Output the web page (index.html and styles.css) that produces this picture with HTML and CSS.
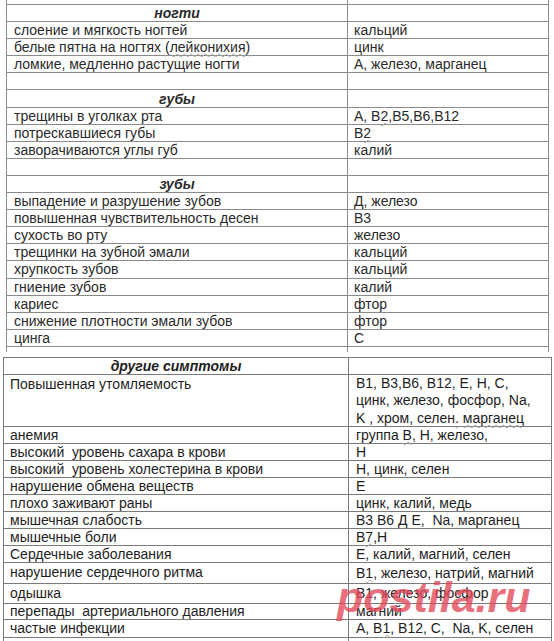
FILE: index.html
```html
<!DOCTYPE html>
<html lang="ru">
<head>
<meta charset="utf-8">
<title>Симптомы и нехватка витаминов</title>
<link rel="stylesheet" href="styles.css">
</head>
<body>
<div class="page">
  <div class="tbl tbl-top">
    <div class="row cut-top"><div class="c1"></div><div class="c2"></div></div>
    <div class="row"><div class="c1 head">ногти</div><div class="c2"></div></div>
    <div class="row"><div class="c1">слоение и мягкость ногтей</div><div class="c2">кальций</div></div>
    <div class="row"><div class="c1"><span>белые пятна на ногтях <span class="sq">(лейконихия)</span></span></div><div class="c2">цинк</div></div>
    <div class="row"><div class="c1">ломкие, медленно растущие ногти</div><div class="c2">А, железо, марганец</div></div>
    <div class="row"><div class="c1"></div><div class="c2"></div></div>
    <div class="row"><div class="c1 head">губы</div><div class="c2"></div></div>
    <div class="row"><div class="c1">трещины в уголках рта</div><div class="c2"><span>А, В<span class="sq">2</span>,В5,В6,В12</span></div></div>
    <div class="row"><div class="c1">потрескавшиеся губы</div><div class="c2"><span>В<span class="sq">2</span></span></div></div>
    <div class="row"><div class="c1">заворачиваются углы губ</div><div class="c2">калий</div></div>
    <div class="row"><div class="c1"></div><div class="c2"></div></div>
    <div class="row"><div class="c1 head">зубы</div><div class="c2"></div></div>
    <div class="row"><div class="c1">выпадение и разрушение зубов</div><div class="c2">Д, железо</div></div>
    <div class="row"><div class="c1">повышенная чувствительность десен</div><div class="c2">В3</div></div>
    <div class="row"><div class="c1">сухость во рту</div><div class="c2">железо</div></div>
    <div class="row"><div class="c1">трещинки на зубной эмали</div><div class="c2">кальций</div></div>
    <div class="row"><div class="c1">хрупкость зубов</div><div class="c2">кальций</div></div>
    <div class="row"><div class="c1">гниение зубов</div><div class="c2">калий</div></div>
    <div class="row"><div class="c1">кариес</div><div class="c2">фтор</div></div>
    <div class="row"><div class="c1">снижение плотности эмали зубов</div><div class="c2">фтор</div></div>
    <div class="row"><div class="c1">цинга</div><div class="c2">С</div></div>
    <div class="row cut-bottom"><div class="c1"></div><div class="c2"></div></div>
  </div>

  <div class="tbl tbl-bottom">
    <div class="row r17"><div class="c1 head">другие симптомы</div><div class="c2"></div></div>
    <div class="row r52"><div class="c1 top">Повышенная утомляемость</div><div class="c2 multi">В1, В3,В6, В12, Е, Н, С,<br>цинк, железо, фосфор, Na,<br>K , хром, селен<span class="sq">.</span> <span class="sq">марганец</span></div></div>
    <div class="row r17"><div class="c1">анемия</div><div class="c2"><span>группа <span class="sq">В</span>, Н, железо,</span></div></div>
    <div class="row r17"><div class="c1">высокий&nbsp; уровень сахара в крови</div><div class="c2">Н</div></div>
    <div class="row r17"><div class="c1">высокий&nbsp; уровень холестерина в крови</div><div class="c2">Н, цинк, селен</div></div>
    <div class="row r17"><div class="c1">нарушение обмена веществ</div><div class="c2">Е</div></div>
    <div class="row r17"><div class="c1">плохо заживают раны</div><div class="c2">цинк, калий, медь</div></div>
    <div class="row r17"><div class="c1">мышечная слабость</div><div class="c2"><span>В3 В6 <span class="sq">Д</span> Е,&nbsp; Na, марганец</span></div></div>
    <div class="row r17"><div class="c1">мышечные боли</div><div class="c2"><span>В<span class="sq">7</span>,Н</span></div></div>
    <div class="row r17"><div class="c1">Сердечные заболевания</div><div class="c2">Е, калий, магний, селен</div></div>
    <div class="row r21"><div class="c1 up">нарушение сердечного ритма</div><div class="c2"><span>В<span class="sq">1</span>, железо, натрий, магний</span></div></div>
    <div class="row r20"><div class="c1 up">одышка</div><div class="c2">В1, железо, фосфор</div></div>
    <div class="row r16"><div class="c1">перепады&nbsp; артериального давления</div><div class="c2">магний</div></div>
    <div class="row r18"><div class="c1">частые инфекции</div><div class="c2"><span>А, В<span class="sq">1</span>, В12, С,&nbsp; Na, K, селен</span></div></div>
    <div class="row r4"><div class="c1"></div><div class="c2"></div></div>
  </div>

  <div class="watermark">postila.ru</div>
</div>
</body>
</html>
```

FILE: styles.css
```css
html, body {
  margin: 0;
  padding: 0;
  background: #ffffff;
}

.page {
  position: relative;
  width: 554px;
  height: 641px;
  overflow: hidden;
  font-family: "Liberation Sans", Arial, sans-serif;
  font-size: 14px;
  color: #1e1e1e;
}

.tbl {
  box-sizing: border-box;
  border-left: 1px solid #8a8a8a;
  border-right: 1px solid #8a8a8a;
}

.tbl-top {
  margin-left: 6px;
  width: 543px;
  color: #2a2a2a;
}

.tbl-bottom {
  margin-left: 3px;
  margin-top: 5px;
  width: 549px;
  border-top: 1px solid #7a7a7a;
  border-left-color: #7a7a7a;
  border-right-color: #7a7a7a;
}

.row {
  box-sizing: border-box;
  display: flex;
  height: 17.1px;
  border-bottom: 1px solid #8a8a8a;
}

.tbl-bottom .row {
  border-bottom-color: #7a7a7a;
}

.c1, .c2 {
  box-sizing: border-box;
  display: flex;
  align-items: center;
  white-space: nowrap;
  line-height: 16px;
}

.tbl-top .c1 {
  width: 341px;
  border-right: 1px solid #8a8a8a;
  padding-left: 7px;
}

.tbl-top .c2 {
  flex: 1;
  padding-left: 6px;
}

.tbl-bottom .c1 {
  width: 345px;
  border-right: 1px solid #7a7a7a;
  padding-left: 6px;
}

.tbl-bottom .c2 {
  flex: 1;
  padding-left: 7px;
}

.head {
  justify-content: center;
  font-style: italic;
  font-weight: bold;
  padding-left: 0 !important;
}

.cut-top {
  height: 5px;
}

.cut-bottom {
  height: 5px;
  border-bottom: none;
}

.tbl-bottom .r17 { height: 17px; }
.tbl-bottom .r52 { height: 52px; }
.tbl-bottom .r21 { height: 21px; }
.tbl-bottom .r20 { height: 20px; }
.tbl-bottom .r18 { height: 18px; }
.tbl-bottom .r16 { height: 16px; }
.tbl-bottom .r4 { height: 4px; border-bottom: none; }

.top {
  align-items: flex-start;
  padding-top: 1px;
}

.up {
  align-items: flex-start;
  padding-top: 1px;
}

.multi {
  display: block;
  line-height: 17.4px;
  padding-top: 0;
}

.sq {
  text-decoration: underline wavy #a8a8a8;
  text-decoration-thickness: 1px;
  text-underline-offset: 1px;
}

.watermark {
  position: absolute;
  left: 337px;
  top: 576px;
  font-family: "Liberation Sans", Arial, sans-serif;
  font-size: 43px;
  line-height: 43px;
  font-weight: bold;
  font-style: italic;
  color: rgba(226, 72, 88, 0.78);
  letter-spacing: 0;
  white-space: nowrap;
}
```
